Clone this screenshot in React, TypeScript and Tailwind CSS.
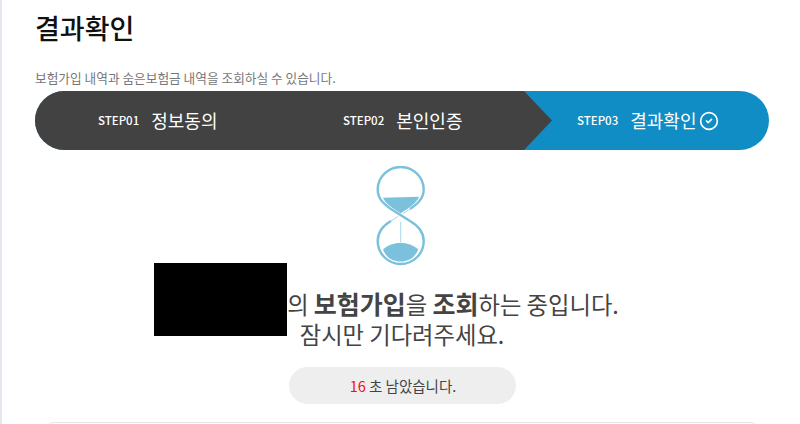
import { CircleCheck } from "lucide-react";

const font = { fontFamily: '"Noto Sans CJK KR", "Noto Sans", sans-serif' };

function Hourglass() {
	return <svg width="50" height="100" viewBox="0 0 50 100" fill="none" className="block">
		<path d="M34 43 C41 38 47.7 33 47.7 23.5 C47.7 11 37.4 1 24.7 1 C12 1 1.7 11 1.7 23.5 C1.7 33 8 38 15 43 L34 55 C41 59 47.7 65 47.7 75 C47.7 87.7 37.4 98 24.7 98 C12 98 1.7 87.7 1.7 75 C1.7 65 8 59 15 55" stroke="#7bc1dc" strokeWidth="2.4" />
		<path d="M34 43 L27 47.5 M22 50.5 L15 55" stroke="#a9d7e8" strokeWidth="1" />
		<path d="M7 31.7 L43 30.7 C41 37 34 41 24.7 47.3 C15 41 9 37 7 31.7 Z" fill="#7bc1dc" />
		<path d="M24.7 55.7 L24.7 76" stroke="#a9d7e8" strokeWidth="1" />
		<path d="M7 83.3 C12 79 18 76.7 24.7 76.7 C31 76.7 37 79 42.3 83.3 C39 92 32 95.5 24.7 95.5 C17 95.5 10 92 7 83.3 Z" fill="#7bc1dc" />
	</svg>
}

export default function App() {
	return <div className="w-[800px] h-[424px] overflow-hidden bg-white border-l-2 border-[#e3e8ee]" style={font}>
		<div className="pl-[33px] pr-[29px]">
			<h1 className="h-[60px] pt-[8px] text-[27px] leading-[40px] font-medium text-[#111]">결과확인</h1>
			<p className="mt-[9px] h-[22px] text-[12.7px] leading-[18px] text-[#777]">보험가입 내역과 숨은보험금 내역을 조회하실 수 있습니다.</p>
			<div className="flex h-[59px] w-[734px] rounded-full overflow-hidden bg-[#108dc5] text-white">
				<div className="w-[245px] bg-[#424242] flex items-center pl-[63px] gap-[12px]">
					<span className="text-[11.5px] font-medium">STEP01</span>
					<span className="text-[18px]">정보동의</span>
				</div>
				<div className="w-[244px] bg-[#424242] flex items-center pl-[63px] gap-[12px]">
					<span className="text-[11.5px] font-medium">STEP02</span>
					<span className="text-[18px]">본인인증</span>
				</div>
				<div className="w-[28px] shrink-0 bg-[#424242] [clip-path:polygon(0_0,100%_50%,0_100%)]" />
				<div className="flex items-center pl-[25px] gap-[12px]">
					<span className="text-[11.5px] font-medium">STEP03</span>
					<span className="text-[18px] flex items-center gap-[3px]">결과확인 <CircleCheck size={20} strokeWidth={2} /></span>
				</div>
			</div>
		</div>
		<div className="flex flex-col items-center">
			<div className="mt-[16px]"><Hourglass /></div>
			<div className="mt-[20px] ml-[-29px] h-[35px] text-[23.3px] leading-[34px] text-[#444] flex items-center whitespace-nowrap">
				<span className="w-[133px] h-[73px] bg-black self-start mt-[-23px]" />
				<span>의 <b className="font-bold text-[25px]">보험가입</b>을 <b className="font-bold text-[25px]">조회</b>하는 중입니다.</span>
			</div>
			<p className="text-[23.3px] leading-[27px] text-[#444] ml-[2px]">잠시만 기다려주세요.</p>
			<div className="mt-[19px] ml-[2px] w-[227px] h-[37px] rounded-full bg-[#eeeeee] flex items-center justify-center text-[14.5px] text-[#444]">
				<span className="ml-[2px]"><span className="text-[#ee1111]">16</span> 초 남았습니다.</span>
			</div>
		</div>
		<div className="ml-[42px] mr-[40px] mt-[18px] h-[20px] rounded-t-[10px] border border-[#e5e5e5]" />
	</div>
}
